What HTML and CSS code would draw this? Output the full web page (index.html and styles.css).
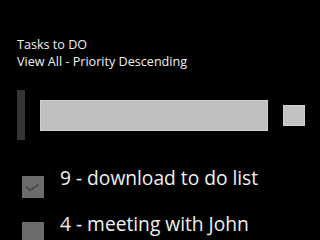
FILE: index.html
```html
<!DOCTYPE html>
<html>
<head>
<meta charset="utf-8">
<link rel="stylesheet" href="styles.css">
</head>
<body>
<div class="page">
  <div class="header">
    <div class="line">Tasks to DO</div>
    <div class="line">View All - Priority Descending</div>
  </div>
  <div class="bar-row">
    <div class="vbar"></div>
    <div class="input"></div>
    <div class="square"></div>
  </div>
  <div class="list">
    <div class="item">
      <div class="check">
        <svg width="22" height="22" viewBox="0 0 22 22"><polyline points="4,10.5 8,14.5 16.5,8.5" fill="none" stroke="#4a4a4a" stroke-width="1.8"/></svg>
      </div>
      <div class="label">9 - download to do list</div>
    </div>
    <div class="item">
      <div class="check"></div>
      <div class="label">4 - meeting with John</div>
    </div>
  </div>
</div>
</body>
</html>
```

FILE: styles.css
```css
html, body {
  margin: 0;
  padding: 0;
  background: #000;
  width: 320px;
  height: 240px;
  overflow: hidden;
}
.page {
  padding: 36px 0 0 17px;
  font-family: "Open Sans", "Noto Sans", sans-serif;
  color: #f0f0f0;
}
.header .line {
  font-size: 12.6px;
  line-height: 17px;
}
.bar-row {
  display: flex;
  align-items: center;
  gap: 15px;
  margin-top: 20px;
  height: 50px;
}
.vbar {
  width: 8px;
  height: 50px;
  background: #353535;
}
.input {
  width: 228px;
  height: 31px;
  box-sizing: border-box;
  background: #bfbfbf;
  border: 1px solid #cfcfcf;
}
.square {
  width: 22px;
  height: 21px;
  box-sizing: border-box;
  background: #c2c2c2;
  border: 1px solid #d0d0d0;
}
.list {
  margin-top: 26px;
  padding-left: 5px;
  display: flex;
  flex-direction: column;
  gap: 14px;
}
.item {
  display: flex;
  align-items: flex-start;
  gap: 16px;
}
.check {
  width: 22px;
  height: 22px;
  margin-top: 10px;
  background: #6c6c6c;
  flex: none;
}
.check svg {
  display: block;
}
.label {
  font-size: 19.2px;
  line-height: 24px;
  white-space: nowrap;
}
```
